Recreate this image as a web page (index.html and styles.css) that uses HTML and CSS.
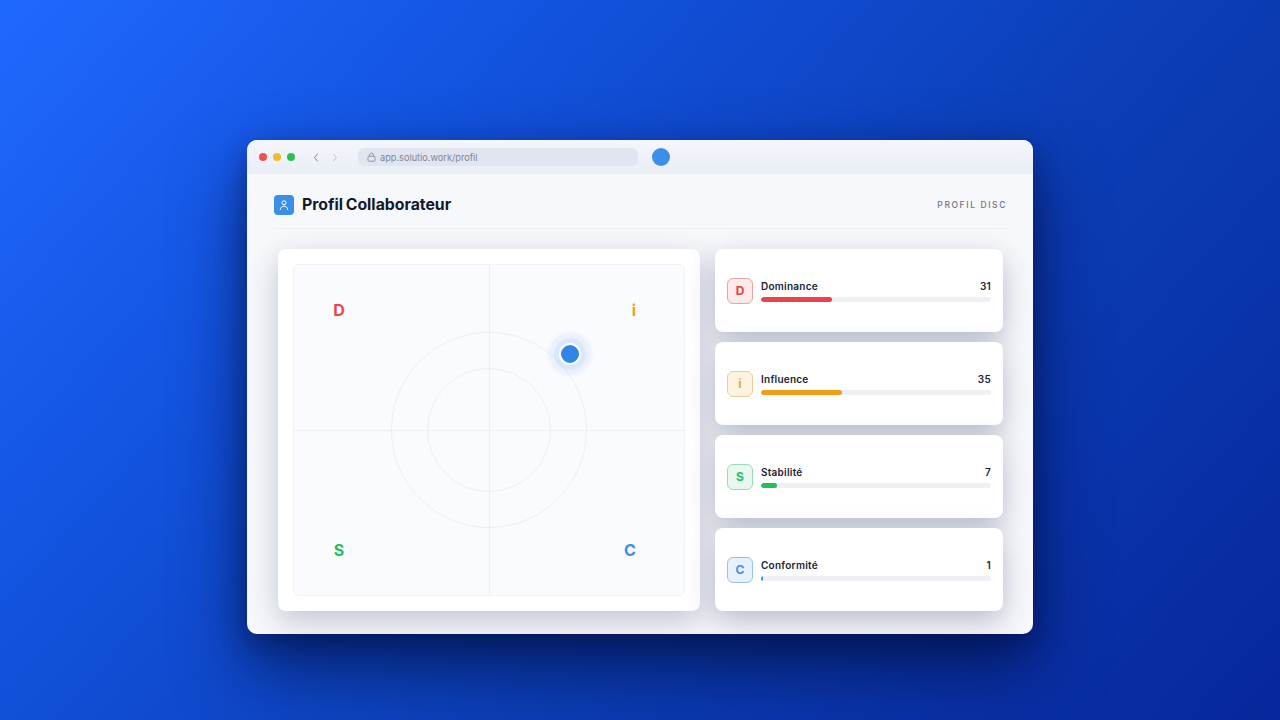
FILE: index.html
```html
<!DOCTYPE html>
<html lang="fr">
<head>
  <meta charset="UTF-8">
  <meta name="viewport" content="width=device-width, initial-scale=1.0">
  <title>Profil Collaborateur</title>
  <link rel="stylesheet" href="styles.css">
</head>
<body>
  <div class="window">
    <div class="titlebar">
      <div class="lights">
        <span class="light red"></span>
        <span class="light yellow"></span>
        <span class="light green"></span>
      </div>
      <div class="arrows">
        <svg width="6" height="9" viewBox="0 0 6 9"><path d="M4.5 1 1.5 4.5 4.5 8" fill="none" stroke="#7b8494" stroke-width="1" stroke-linecap="round" stroke-linejoin="round"/></svg>
        <svg width="6" height="9" viewBox="0 0 6 9"><path d="M1.5 1 4.5 4.5 1.5 8" fill="none" stroke="#bcc2ce" stroke-width="1" stroke-linecap="round" stroke-linejoin="round"/></svg>
      </div>
      <div class="url">
        <svg width="9" height="10" viewBox="0 0 9 10"><rect x="1" y="4.2" width="7" height="5" rx="1" fill="none" stroke="#868e9d" stroke-width="0.9"/><path d="M2.6 4.2V2.9a1.9 1.9 0 0 1 3.8 0v1.3" fill="none" stroke="#868e9d" stroke-width="0.9"/></svg>
        <span>app.solutio.work/profil</span>
      </div>
      <span class="avatar"></span>
    </div>

    <div class="content">
      <div class="header">
        <div class="title">
          <span class="title-icon">
            <svg width="12" height="12" viewBox="0 0 12 12"><circle cx="6" cy="3.8" r="2" fill="none" stroke="#fff" stroke-width="1"/><path d="M2.3 10.5c.2-2.2 1.7-3.3 3.7-3.3s3.5 1.1 3.7 3.3" fill="none" stroke="#fff" stroke-width="1" stroke-linecap="round"/></svg>
          </span>
          <h1>Profil Collaborateur</h1>
        </div>
        <span class="eyebrow">PROFIL DISC</span>
      </div>

      <div class="main">
        <div class="chart-card">
          <div class="chart">
            <span class="axis-v"></span>
            <span class="axis-h"></span>
            <span class="ring ring-big"></span>
            <span class="ring ring-small"></span>
            <span class="letter letter-d">D</span>
            <span class="letter letter-i">i</span>
            <span class="letter letter-s">S</span>
            <span class="letter letter-c">C</span>
            <span class="marker"></span>
          </div>
        </div>

        <div class="stats">
          <div class="stat">
            <span class="badge badge-d">D</span>
            <div class="stat-body">
              <div class="stat-row"><span>Dominance</span><span>31</span></div>
              <div class="bar"><div class="fill fill-d" style="width: 31%"></div></div>
            </div>
          </div>
          <div class="stat">
            <span class="badge badge-i">i</span>
            <div class="stat-body">
              <div class="stat-row"><span>Influence</span><span>35</span></div>
              <div class="bar"><div class="fill fill-i" style="width: 35%"></div></div>
            </div>
          </div>
          <div class="stat">
            <span class="badge badge-s">S</span>
            <div class="stat-body">
              <div class="stat-row"><span>Stabilité</span><span>7</span></div>
              <div class="bar"><div class="fill fill-s" style="width: 7%"></div></div>
            </div>
          </div>
          <div class="stat">
            <span class="badge badge-c">C</span>
            <div class="stat-body">
              <div class="stat-row"><span>Conformité</span><span>1</span></div>
              <div class="bar"><div class="fill fill-c" style="width: 1%"></div></div>
            </div>
          </div>
        </div>
      </div>
    </div>
  </div>
</body>
</html>
```

FILE: styles.css
```css
html, body {
  height: 100%;
}
body {
  margin: 0;
  height: 720px;
  overflow: hidden;
  box-sizing: border-box;
  padding-top: 140px;
  font-family: Inter, "Noto Sans", sans-serif;
  color: #111827;
  background: linear-gradient(132deg, #2069ff 0%, #1252dd 30%, #0c3fb8 60%, #07279c 100%);
}
.window {
  width: 786px;
  height: 494px;
  margin: 0 auto;
  border-radius: 10px;
  overflow: hidden;
  background: #f7f8fb;
  box-shadow: 0 34px 70px rgba(0, 10, 55, 0.65), 0 10px 26px rgba(0, 10, 55, 0.35);
}
.titlebar {
  display: flex;
  align-items: center;
  height: 34px;
  box-sizing: border-box;
  padding-left: 12px;
  background: linear-gradient(to bottom, #f4f6fb, #e9edf6);
}
.lights {
  display: flex;
  gap: 6px;
}
.light {
  width: 8px;
  height: 8px;
  border-radius: 50%;
}
.red { background: #ef5350; }
.yellow { background: #f5b82e; }
.green { background: #2fbf4f; }
.arrows {
  display: flex;
  gap: 13px;
  margin-left: 18px;
}
.url {
  display: flex;
  align-items: center;
  gap: 4px;
  width: 280px;
  height: 18px;
  box-sizing: border-box;
  margin-left: 20px;
  padding-left: 9px;
  border-radius: 6px;
  background: #e1e5ef;
  font-size: 9.2px;
  color: #7d8594;
}
.avatar {
  width: 18px;
  height: 18px;
  margin-left: 14px;
  border-radius: 50%;
  background: #3b8fe8;
}
.content {
  padding: 0 26px 0 27px;
}
.header {
  display: flex;
  justify-content: space-between;
  align-items: center;
  height: 55px;
  box-sizing: border-box;
  padding-top: 7px;
  border-bottom: 1px solid #eef0f3;
}
.title {
  display: flex;
  align-items: center;
  gap: 8px;
}
.title-icon {
  display: flex;
  align-items: center;
  justify-content: center;
  width: 20px;
  height: 20px;
  border-radius: 4px;
  background: #3b8fe8;
}
h1 {
  margin: 0;
  font-size: 15.8px;
  font-weight: 700;
  word-spacing: -1px;
  color: #111a2c;
}
.eyebrow {
  font-size: 8.5px;
  font-weight: 500;
  letter-spacing: 1.6px;
  color: #6f7580;
}
.main {
  display: flex;
  gap: 15px;
  margin: 20px 4px 0 4px;
}
.chart-card {
  width: 422px;
  height: 362px;
  box-sizing: border-box;
  padding: 15px;
  border-radius: 8px;
  background: #fff;
  box-shadow: 0 10px 30px rgba(20, 35, 80, 0.24);
}
.chart {
  position: relative;
  height: 100%;
  box-sizing: border-box;
  border: 1px solid #f0f2f5;
  border-radius: 6px;
  background: #fafbfe;
  overflow: hidden;
}
.axis-v {
  position: absolute;
  left: 195px;
  top: 0;
  bottom: 0;
  width: 1px;
  background: #eef0f4;
}
.axis-h {
  position: absolute;
  left: 0;
  right: 0;
  top: 165px;
  height: 1px;
  background: #eef0f4;
}
.ring {
  position: absolute;
  box-sizing: border-box;
  border: 1px solid #eceef2;
  border-radius: 50%;
}
.ring-big {
  left: 97px;
  top: 67px;
  width: 196px;
  height: 196px;
}
.ring-small {
  left: 133px;
  top: 103px;
  width: 124px;
  height: 124px;
}
.letter {
  position: absolute;
  width: 20px;
  text-align: center;
  font-size: 16px;
  line-height: 20px;
  font-weight: 700;
}
.letter-d { left: 35px; top: 35px; color: #e5484d; }
.letter-i { left: 330px; top: 35px; color: #f0a01f; }
.letter-s { left: 35px; top: 275px; color: #2dbb63; }
.letter-c { left: 326px; top: 275px; color: #3b8fe8; }
.marker {
  position: absolute;
  left: 265px;
  top: 78px;
  width: 18px;
  height: 18px;
  border: 2px solid #fff;
  border-radius: 50%;
  background: #2f86e6;
  box-shadow: 0 0 2px 5px rgba(59, 143, 232, 0.1), 0 0 3px 11px rgba(59, 143, 232, 0.08);
}
.stats {
  display: flex;
  flex-direction: column;
  gap: 10px;
  width: 288px;
}
.stat {
  display: flex;
  align-items: center;
  gap: 8px;
  height: 83px;
  box-sizing: border-box;
  padding: 0 12px;
  border-radius: 8px;
  background: #fff;
  box-shadow: 0 10px 28px rgba(20, 35, 80, 0.28);
}
.badge {
  display: flex;
  align-items: center;
  justify-content: center;
  flex: none;
  width: 26px;
  height: 26px;
  box-sizing: border-box;
  border: 1px solid;
  border-radius: 6px;
  font-size: 12px;
  font-weight: 700;
}
.badge-d { background: #fdeaea; border-color: #e3a5a8; color: #dc4448; }
.badge-i { background: #fdf3e1; border-color: #eccd91; color: #eda726; }
.badge-s { background: #e8f8ee; border-color: #9fd8b5; color: #2dbb63; }
.badge-c { background: #e7f1fc; border-color: #9cc0e4; color: #3b8fe8; }
.stat-body {
  flex: 1;
}
.stat-row {
  display: flex;
  justify-content: space-between;
  font-size: 10px;
  line-height: 14px;
  font-weight: 600;
  letter-spacing: 0.25px;
  color: #1a2233;
}
.bar {
  height: 5px;
  margin-top: 4px;
  border-radius: 3px;
  background: #eef0f3;
  overflow: hidden;
}
.fill {
  height: 100%;
  border-radius: 3px;
}
.fill-d { background: #e8444a; }
.fill-i { background: #f19e17; }
.fill-s { background: #22c05c; }
.fill-c { background: #3b8fe8; }
```
